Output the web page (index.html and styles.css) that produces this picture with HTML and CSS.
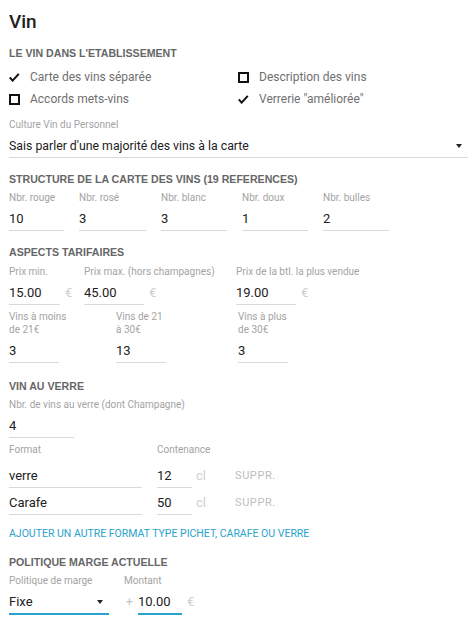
FILE: index.html
```html
<!DOCTYPE html>
<html lang="fr">
<head>
    <meta charset="UTF-8">
    <meta name="viewport" content="width=device-width, initial-scale=1.0">
    <title>Vin</title>
    <link rel="stylesheet" href="styles.css">
</head>
<body>
    <div class="page">
        <h1 class="title">Vin</h1>

        <h2 class="section first">LE VIN DANS L'ETABLISSEMENT</h2>
        <div class="checks">
            <div class="check">
                <span class="mark"><svg width="11" height="9" viewBox="0 0 11 9"><path d="M0.8 4.4 L3.6 7.6 L9.8 0.8" fill="none" stroke="#111" stroke-width="2"/></svg></span>
                Carte des vins séparée
            </div>
            <div class="check">
                <span class="mark"><span class="box"></span></span>
                Description des vins
            </div>
            <div class="check">
                <span class="mark"><span class="box"></span></span>
                Accords mets-vins
            </div>
            <div class="check">
                <span class="mark"><svg width="11" height="9" viewBox="0 0 11 9"><path d="M0.8 4.4 L3.6 7.6 L9.8 0.8" fill="none" stroke="#111" stroke-width="2"/></svg></span>
                Verrerie "améliorée"
            </div>
        </div>

        <div class="field culture">
            <div class="label">Culture Vin du Personnel</div>
            <div class="input select">Sais parler d'une majorité des vins à la carte<span class="caret"></span></div>
        </div>

        <h2 class="section">STRUCTURE DE LA CARTE DES VINS (19 REFERENCES)</h2>
        <div class="row row-nbr">
            <div class="field">
                <div class="label">Nbr. rouge</div>
                <div class="input">10</div>
            </div>
            <div class="field">
                <div class="label">Nbr. rosé</div>
                <div class="input">3</div>
            </div>
            <div class="field">
                <div class="label">Nbr. blanc</div>
                <div class="input">3</div>
            </div>
            <div class="field">
                <div class="label">Nbr. doux</div>
                <div class="input">1</div>
            </div>
            <div class="field">
                <div class="label">Nbr. bulles</div>
                <div class="input">2</div>
            </div>
        </div>

        <h2 class="section">ASPECTS TARIFAIRES</h2>
        <div class="row row-prix">
            <div class="field">
                <div class="label">Prix min.</div>
                <div class="line"><div class="input w51">15.00</div><span class="suffix">€</span></div>
            </div>
            <div class="field">
                <div class="label">Prix max. (hors champagnes)</div>
                <div class="line"><div class="input w60">45.00</div><span class="suffix">€</span></div>
            </div>
            <div class="field">
                <div class="label">Prix de la btl. la plus vendue</div>
                <div class="line"><div class="input w60">19.00</div><span class="suffix">€</span></div>
            </div>
        </div>
        <div class="row row-vins">
            <div class="field">
                <div class="label">Vins à moins<br>de 21€</div>
                <div class="input w50">3</div>
            </div>
            <div class="field">
                <div class="label">Vins de 21<br>à 30€</div>
                <div class="input w50">13</div>
            </div>
            <div class="field">
                <div class="label">Vins à plus<br>de 30€</div>
                <div class="input w50">3</div>
            </div>
        </div>

        <h2 class="section verre-head">VIN AU VERRE</h2>
        <div class="field verre">
            <div class="label">Nbr. de vins au verre (dont Champagne)</div>
            <div class="input w65">4</div>
        </div>
        <div class="formats">
            <div class="format-head">
                <div class="label col-name">Format</div>
                <div class="label">Contenance</div>
            </div>
            <div class="format-row">
                <div class="input col-name-input">verre</div>
                <div class="input w35">12</div>
                <span class="unit">cl</span>
                <span class="remove">SUPPR.</span>
            </div>
            <div class="format-row">
                <div class="input col-name-input">Carafe</div>
                <div class="input w35">50</div>
                <span class="unit">cl</span>
                <span class="remove">SUPPR.</span>
            </div>
        </div>
        <div class="add-link">AJOUTER UN AUTRE FORMAT TYPE PICHET, CARAFE OU VERRE</div>

        <h2 class="section">POLITIQUE MARGE ACTUELLE</h2>
        <div class="row row-marge">
            <div class="field">
                <div class="label">Politique de marge</div>
                <div class="input select active w100">Fixe<span class="caret"></span></div>
            </div>
            <div class="field montant">
                <div class="label">Montant</div>
                <div class="line"><span class="prefix">+</span><div class="input active w44">10.00</div><span class="suffix">€</span></div>
            </div>
        </div>
    </div>
</body>
</html>
```

FILE: styles.css
```css
body {
    margin: 0;
    background: #fff;
    font-family: Roboto, "Noto Sans", sans-serif;
    color: #212121;
}
.page {
    padding: 10px 5px 0 9px;
}
.title {
    margin: 0;
    font-size: 19px;
    line-height: 24px;
    font-weight: 500;
}
.section {
    margin: 14px 0 0;
    font: bold 10.6px/14px "Liberation Sans", Arial, sans-serif;
    color: #666;
}
.section.first {
    margin-top: 12px;
}
.section.verre-head {
    margin-top: 16px;
}
.checks {
    display: grid;
    grid-template-columns: 229px 1fr;
    margin-top: 6px;
}
.check {
    display: flex;
    align-items: center;
    height: 22px;
    font-size: 12px;
    color: #707070;
}
.mark {
    width: 21px;
    display: flex;
    align-items: center;
}
.box {
    width: 11px;
    height: 11px;
    border: 2px solid #111;
    box-sizing: border-box;
}
.label {
    font-size: 10px;
    line-height: 13px;
    color: #a3a3a3;
    white-space: nowrap;
}
.input {
    margin-top: 5px;
    font-size: 13px;
    line-height: 20px;
    padding-bottom: 1px;
    border-bottom: 1px solid #d9d9d9;
    color: #212121;
}
.line {
    display: flex;
    align-items: flex-end;
    margin-top: 5px;
}
.line .input {
    margin-top: 0;
}
.suffix, .unit {
    font-size: 13px;
    line-height: 20px;
    color: #cfcfcf;
    align-self: flex-start;
}
.suffix {
    margin-left: 5px;
}
.select {
    display: flex;
    justify-content: space-between;
    align-items: center;
}
.caret {
    width: 0;
    height: 0;
    border-left: 3px solid transparent;
    border-right: 3px solid transparent;
    border-top: 4px solid #222;
    margin-right: 6px;
}
.culture {
    margin-top: 8px;
}
.culture .select {
    font-size: 12.3px;
}
.row {
    display: grid;
    margin-top: 5px;
}
.row-nbr {
    grid-template-columns: 55px 67px 66px 66px 66px;
    column-gap: 15px;
}
.row-prix {
    grid-template-columns: 75px 152px auto;
    margin-top: 6px;
}
.row-vins {
    grid-template-columns: 107px 122px auto;
}
.w35 { width: 35px; }
.w44 { width: 44px; }
.w50 { width: 50px; }
.w51 { width: 51px; }
.w60 { width: 60px; }
.w65 { width: 65px; }
.w100 { width: 100px; }
.verre {
    margin-top: 5px;
}
.formats {
    margin-top: 5px;
}
.format-head {
    display: flex;
    margin-bottom: 10px;
}
.col-name {
    width: 148px;
}
.format-row {
    display: flex;
    align-items: flex-start;
    margin-bottom: 5px;
}
.format-row .input {
    margin-top: 0;
}
.col-name-input {
    width: 133px;
    margin-right: 15px;
}
.unit {
    margin-left: 4px;
    width: 39px;
}
.remove {
    font-size: 11px;
    letter-spacing: 0.6px;
    line-height: 20px;
    color: #bdbdbd;
}
.add-link {
    margin-top: 12px;
    font-size: 10.5px;
    line-height: 14px;
    color: #29a3cc;
}
.row-marge {
    grid-template-columns: 115px auto;
}
.input.active {
    border-bottom: 2px solid #29a3cc;
}
.prefix {
    width: 14px;
    font-size: 12px;
    line-height: 20px;
    color: #c4c4c4;
    align-self: flex-start;
    padding-left: 2px;
    box-sizing: border-box;
}
```
